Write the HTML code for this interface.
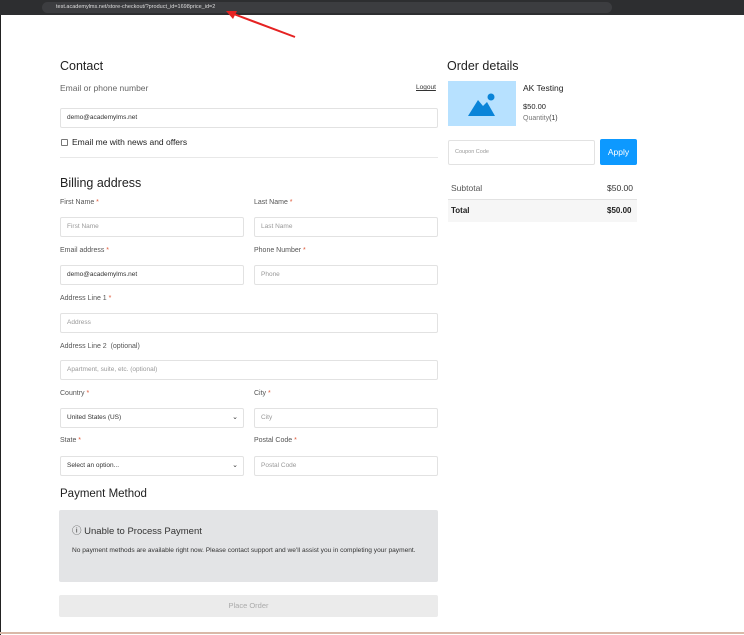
<!DOCTYPE html>
<html><head><style>
*{box-sizing:border-box;margin:0;padding:0}
body{width:744px;height:635px;background:#fff;font-family:"Liberation Sans",sans-serif;position:relative;overflow:hidden;color:#222}
.a{position:absolute}
.bar{left:0;top:0;width:744px;height:15px;background:#2d2e30}
.url{left:42px;top:2px;width:570px;height:11px;background:#3c3d40;border-radius:6px;color:#ddd;font-size:5.5px;line-height:11px;padding-left:14px}
h2{position:absolute;font-weight:normal;font-size:12.5px;color:#222}
.lbl{position:absolute;font-size:7px;color:#555}
.lbl i{color:#e05a3a;font-style:normal}
.in{position:absolute;height:20px;border:1px solid #e2e2e2;border-radius:2px;font-size:6.5px;color:#999;line-height:18px;padding-left:6px;background:#fff}
.in.v{color:#333}
</style></head><body>
<div class="a bar"></div>
<div class="a url">test.academylms.net/store-checkout/?product_id=1698price_id=2</div>
<div class="a" style="left:0;top:15px;width:1px;height:620px;background:#222"></div>
<div class="a" style="left:0;top:632px;width:744px;height:2px;background:#d9b9a8"></div>
<svg class="a" style="left:225px;top:8px" width="72" height="32"><line x1="70" y1="29" x2="6" y2="5" stroke="#e52222" stroke-width="2"/><polygon points="1,3 12,3 8,11" fill="#e52222"/></svg>

<h2 style="left:60px;top:59px">Contact</h2>
<div class="a" style="left:60px;top:83px;font-size:8.5px;color:#666">Email or phone number</div>
<div class="a" style="left:416px;top:84px;font-size:6.5px;text-decoration:underline;color:#333">Logout</div>
<div class="in v" style="left:60px;top:108px;width:378px">demo@academylms.net</div>
<div class="a" style="left:61px;top:139px;width:7px;height:7px;border:1px solid #777;border-radius:1px"></div>
<div class="a" style="left:72px;top:137px;font-size:8.5px;color:#222">Email me with news and offers</div>
<div class="a" style="left:60px;top:157px;width:378px;height:1px;background:#e8e8e8"></div>
<h2 style="left:60px;top:176px">Billing address</h2>
<div class="lbl" style="left:60px;top:199px">First Name <i>*</i></div>
<div class="lbl" style="left:254px;top:199px">Last Name <i>*</i></div>
<div class="in" style="left:60px;top:217px;width:184px">First Name</div>
<div class="in" style="left:254px;top:217px;width:184px">Last Name</div>
<div class="lbl" style="left:60px;top:247px">Email address <i>*</i></div>
<div class="lbl" style="left:254px;top:247px">Phone Number <i>*</i></div>
<div class="in v" style="left:60px;top:265px;width:184px">demo@academylms.net</div>
<div class="in" style="left:254px;top:265px;width:184px">Phone</div>
<div class="lbl" style="left:60px;top:295px">Address Line 1 <i>*</i></div>
<div class="in" style="left:60px;top:313px;width:378px">Address</div>
<div class="lbl" style="left:60px;top:343px">Address Line 2 &nbsp;(optional)</div>
<div class="in" style="left:60px;top:360px;width:378px">Apartment, suite, etc. (optional)</div>
<div class="lbl" style="left:60px;top:390px">Country <i>*</i></div>
<div class="lbl" style="left:254px;top:390px">City <i>*</i></div>
<div class="in v" style="left:60px;top:408px;width:184px">United States (US)<span style="position:absolute;right:5px;font-size:7px">⌄</span></div>
<div class="in" style="left:254px;top:408px;width:184px">City</div>
<div class="lbl" style="left:60px;top:437px">State <i>*</i></div>
<div class="lbl" style="left:254px;top:437px">Postal Code <i>*</i></div>
<div class="in v" style="left:60px;top:456px;width:184px">Select an option...<span style="position:absolute;right:5px;font-size:7px">⌄</span></div>
<div class="in" style="left:254px;top:456px;width:184px">Postal Code</div>
<h2 style="left:60px;top:488px;font-size:11.5px">Payment Method</h2>
<div class="a" style="left:59px;top:510px;width:379px;height:72px;background:#e3e4e6;border-radius:2px"></div>
<div class="a" style="left:72px;top:523px;font-size:9.5px;color:#333">ⓘ Unable to Process Payment</div>
<div class="a" style="left:72px;top:545px;width:355px;font-size:6.6px;line-height:12px;color:#333">No payment methods are available right now. Please contact support and we'll assist you in completing your payment.</div>
<div class="a" style="left:59px;top:595px;width:379px;height:22px;background:#ebebeb;border-radius:2px;font-size:7.5px;color:#aaa;text-align:center;line-height:22px">Place Order</div>

<h2 style="left:447px;top:59px">Order details</h2>
<div class="a" style="left:448px;top:81px;width:68px;height:45px;background:#b7e1ff"></div>
<svg class="a" style="left:468px;top:91px" width="30" height="26"><path d="M0 25 L10 9 L15 15 L19 11 L27 25 Z" fill="#0a84d8"/><circle cx="23" cy="6" r="3.5" fill="#0a84d8"/></svg>
<div class="a" style="left:523px;top:83px;font-size:8.5px">AK Testing</div>
<div class="a" style="left:523px;top:102px;font-size:7.5px">$50.00</div>
<div class="a" style="left:523px;top:115px;font-size:7px;color:#777">Quantity<span style="color:#333">(1)</span></div>
<div class="in" style="left:448px;top:140px;width:147px;height:25px;line-height:23px;font-size:5.5px">Coupon Code</div>
<div class="a" style="left:600px;top:139px;width:37px;height:26px;background:#0d99ff;border-radius:2px;color:#fff;font-size:8.5px;text-align:center;line-height:26px">Apply</div>
<div class="a" style="left:451px;top:183px;font-size:8.5px;color:#555">Subtotal</div>
<div class="a" style="left:607px;top:183px;font-size:8.5px;color:#333">$50.00</div>
<div class="a" style="left:448px;top:199px;width:189px;height:23px;background:#f6f6f6;border-top:1px solid #e2e2e2"></div>
<div class="a" style="left:451px;top:206px;font-size:8px;font-weight:bold">Total</div>
<div class="a" style="left:607px;top:206px;font-size:8px;font-weight:bold">$50.00</div>
</body></html>
